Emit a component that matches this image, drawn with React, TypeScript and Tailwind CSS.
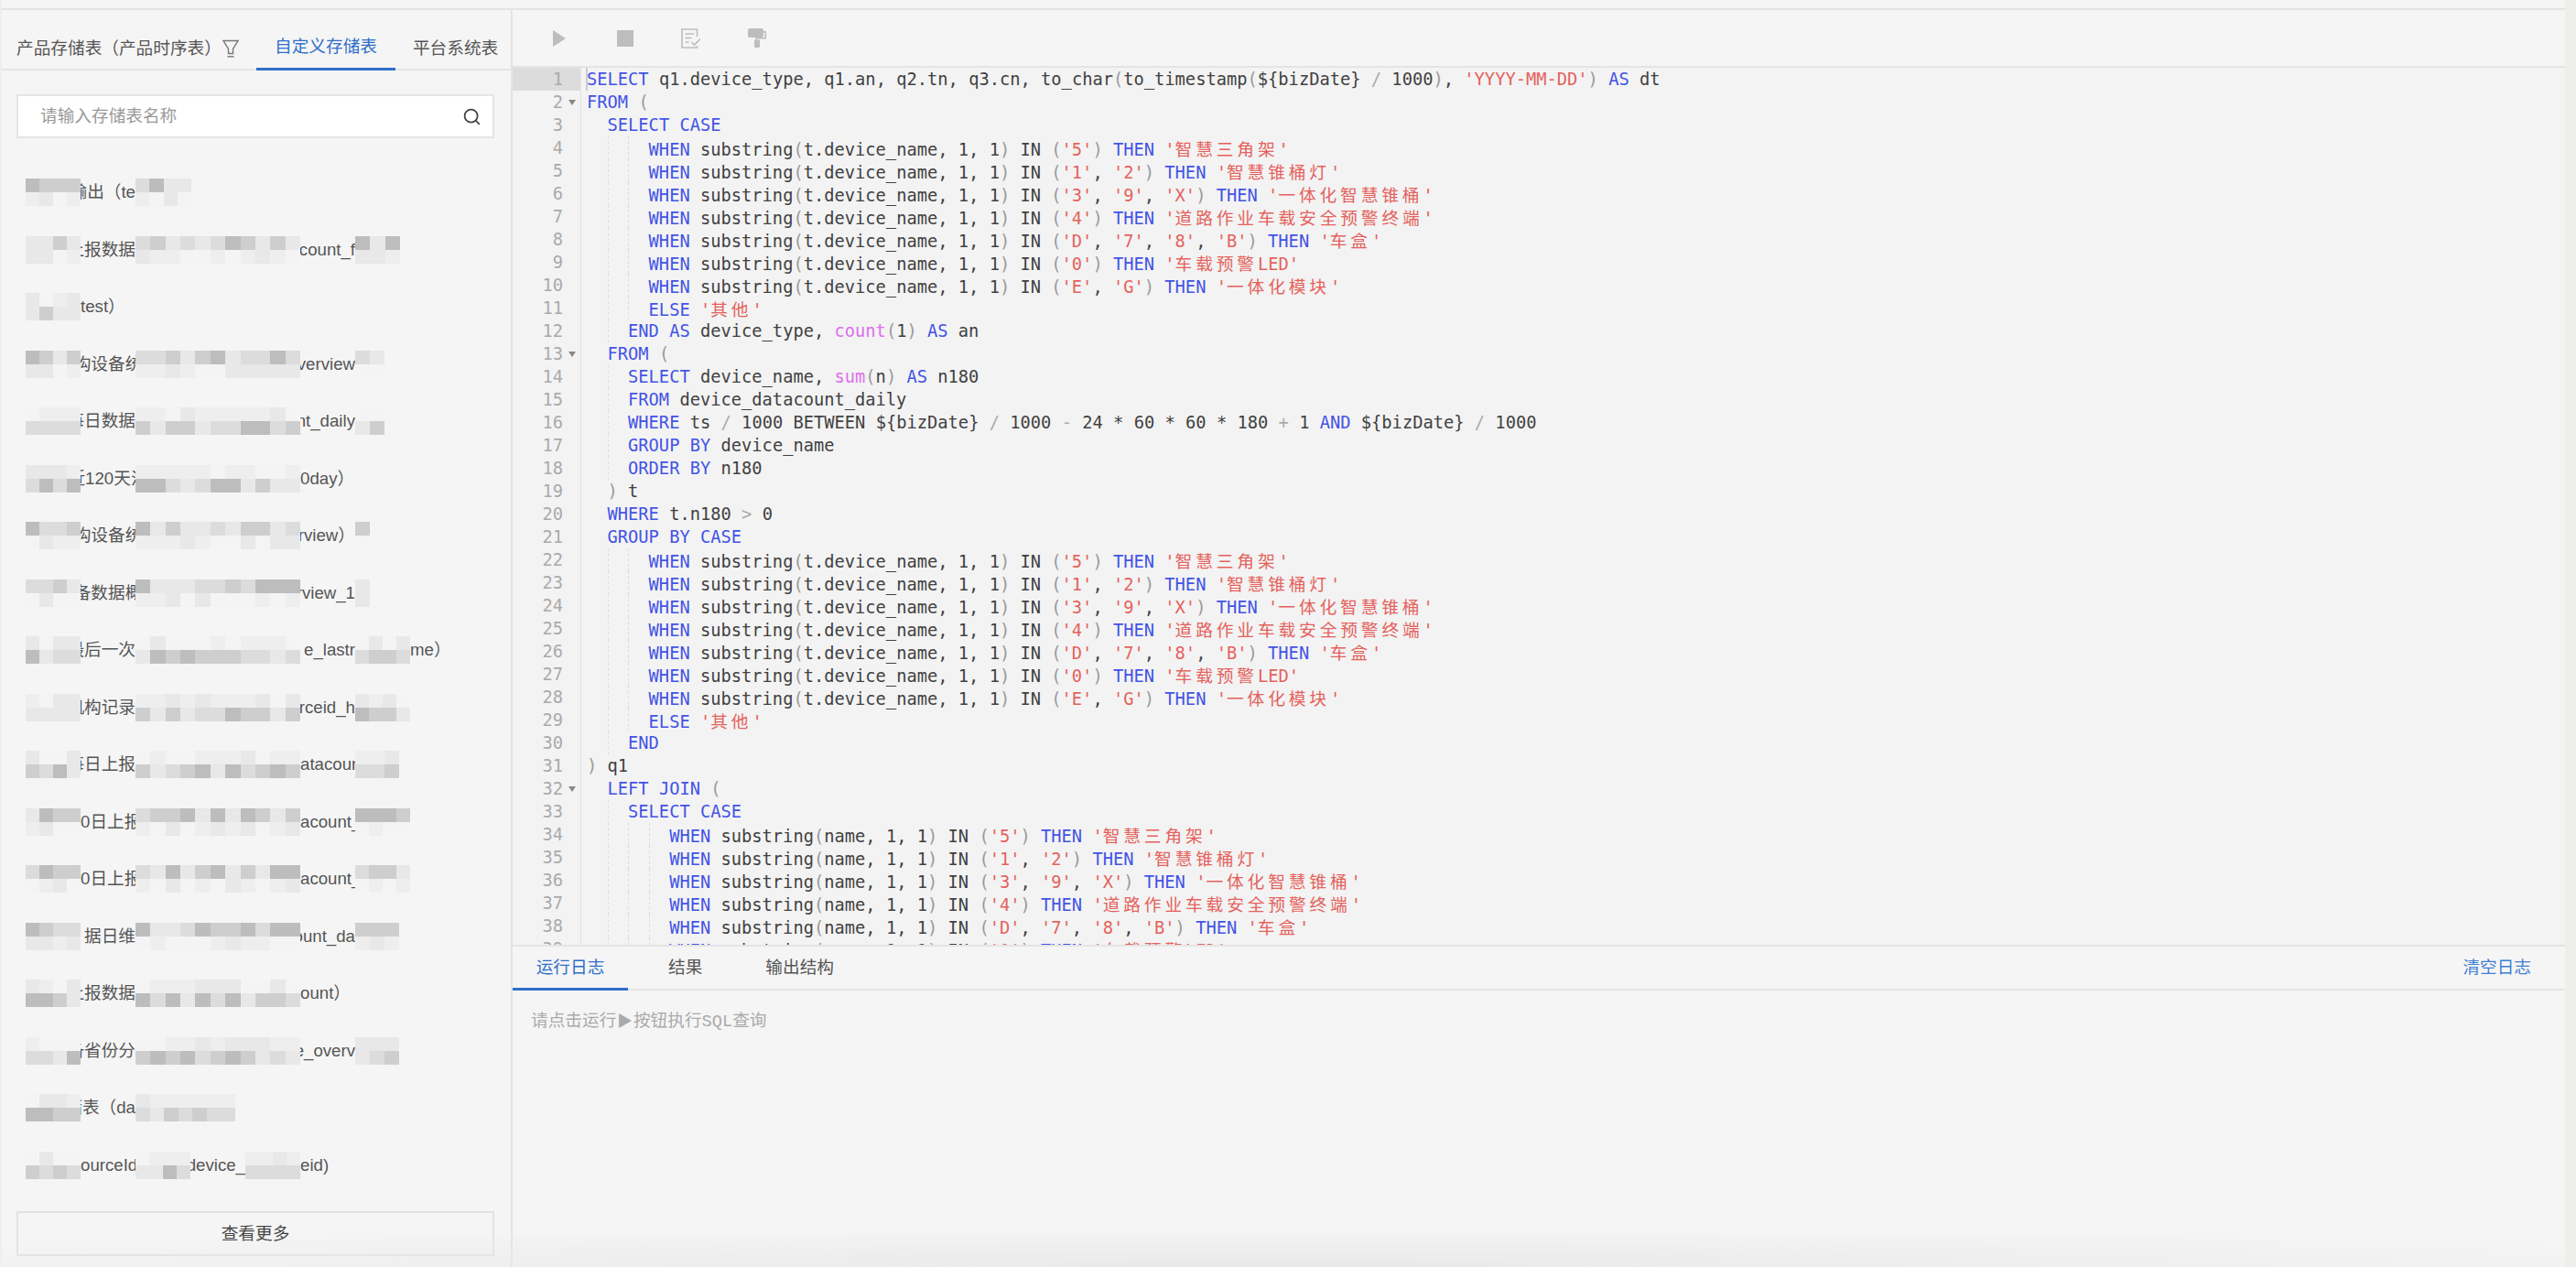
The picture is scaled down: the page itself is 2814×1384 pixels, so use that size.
import React from "react";
import { Search } from "lucide-react";

const code = `SELECT q1.device_type, q1.an, q2.tn, q3.cn, to_char(to_timestamp(\${bizDate} / 1000), 'YYYY-MM-DD') AS dt
FROM (
  SELECT CASE
      WHEN substring(t.device_name, 1, 1) IN ('5') THEN '智慧三角架'
      WHEN substring(t.device_name, 1, 1) IN ('1', '2') THEN '智慧锥桶灯'
      WHEN substring(t.device_name, 1, 1) IN ('3', '9', 'X') THEN '一体化智慧锥桶'
      WHEN substring(t.device_name, 1, 1) IN ('4') THEN '道路作业车载安全预警终端'
      WHEN substring(t.device_name, 1, 1) IN ('D', '7', '8', 'B') THEN '车盒'
      WHEN substring(t.device_name, 1, 1) IN ('0') THEN '车载预警LED'
      WHEN substring(t.device_name, 1, 1) IN ('E', 'G') THEN '一体化模块'
      ELSE '其他'
    END AS device_type, count(1) AS an
  FROM (
    SELECT device_name, sum(n) AS n180
    FROM device_datacount_daily
    WHERE ts / 1000 BETWEEN \${bizDate} / 1000 - 24 * 60 * 60 * 180 + 1 AND \${bizDate} / 1000
    GROUP BY device_name
    ORDER BY n180
  ) t
  WHERE t.n180 > 0
  GROUP BY CASE
      WHEN substring(t.device_name, 1, 1) IN ('5') THEN '智慧三角架'
      WHEN substring(t.device_name, 1, 1) IN ('1', '2') THEN '智慧锥桶灯'
      WHEN substring(t.device_name, 1, 1) IN ('3', '9', 'X') THEN '一体化智慧锥桶'
      WHEN substring(t.device_name, 1, 1) IN ('4') THEN '道路作业车载安全预警终端'
      WHEN substring(t.device_name, 1, 1) IN ('D', '7', '8', 'B') THEN '车盒'
      WHEN substring(t.device_name, 1, 1) IN ('0') THEN '车载预警LED'
      WHEN substring(t.device_name, 1, 1) IN ('E', 'G') THEN '一体化模块'
      ELSE '其他'
    END
) q1
  LEFT JOIN (
    SELECT CASE
        WHEN substring(name, 1, 1) IN ('5') THEN '智慧三角架'
        WHEN substring(name, 1, 1) IN ('1', '2') THEN '智慧锥桶灯'
        WHEN substring(name, 1, 1) IN ('3', '9', 'X') THEN '一体化智慧锥桶'
        WHEN substring(name, 1, 1) IN ('4') THEN '道路作业车载安全预警终端'
        WHEN substring(name, 1, 1) IN ('D', '7', '8', 'B') THEN '车盒'
        WHEN substring(name, 1, 1) IN ('0') THEN '车载预警LED'`.split("\n");

const keywords = ["SELECT", "CASE", "WHEN", "THEN", "ELSE", "END", "AS", "FROM", "WHERE", "GROUP", "BY", "ORDER", "LEFT", "JOIN", "AND"];
const foldLines = [2, 13, 32];

// each row: number = blurred block width, string = visible bit of text
// text prefix: ^ centre it, < left align it, default right align (runs under the block on the left)
const tables: { dark: number; parts: (number | string)[] }[] = [
  { dark: 0, parts: [60, "输出（te", 61] },
  { dark: 0, parts: [60, "上报数据", 180, "count_f", 49] },
  { dark: 1, parts: [60, "test）"] },
  { dark: 0, parts: [60, "^构设备统", 180, "verview", 32] },
  { dark: 1, parts: [60, "每日数据", 180, "nt_daily", 32] },
  { dark: 1, parts: [60, "^近120天汇", 180, "0day）"] },
  { dark: 0, parts: [60, "^构设备统", 180, "erview）", 16] },
  { dark: 0, parts: [60, "^备数据概", 180, "rview_1", 16] },
  { dark: 1, parts: [60, "最后一次", 180, "e_lastr", 60, "me）"] },
  { dark: 1, parts: [60, "机构记录", 180, "rceid_h", 60] },
  { dark: 1, parts: [60, "每日上报", 180, "<atacoun", 48] },
  { dark: 0, parts: [60, "<0日上报", 180, "<acount_", 60] },
  { dark: 0, parts: [60, "<0日上报", 180, "<acount_", 60] },
  { dark: 0, parts: [60, "据日维", 180, "ount_da", 48] },
  { dark: 1, parts: [60, "上报数据", 180, "ount）"] },
  { dark: 1, parts: [60, "备省份分", 180, "e_overv", 48] },
  { dark: 1, parts: [60, "储表（da", 109] },
  { dark: 1, parts: [60, "<ourceId", 60, "device_", 60, "eid)"] },
];

const grays = ["bg-[#f4f4f4]", "bg-[#eeeeee]", "bg-[#e8e8e8]", "bg-[#dcdcdc]", "bg-[#cecece]", "bg-[#bdbdbd]"];

function level(seed: number, row: number, col: number, dark: boolean) {
  const n = Math.sin(seed * 12.9 + col * 78.2 + row * 37.7) * 43758.5;
  const r = n - Math.floor(n);
  return dark ? 2 + Math.floor(r * 4) : Math.floor(r * 3);
}

const Mosaic = ({ width, seed, dark }: { width: number; seed: number; dark: number }) => {
  const cols = Math.max(1, Math.round(width / 16));
  return (
    <div className="relative z-10 flex shrink-0 flex-col" style={{ width }}>
      {[0, 1].map((r) => (
        <div key={r} className="flex h-[15px]">
          {Array.from({ length: cols }).map((_, c) => (
            <div key={c} className={`flex-1 ${grays[level(seed, r, c, r === dark)]}`}></div>
          ))}
        </div>
      ))}
    </div>
  );
};

const TableRow = ({ dark, parts, index }: { dark: number; parts: (number | string)[]; index: number }) => (
  <div className="flex h-[62.5px] items-center pl-[26px] text-[#555]">
    {parts.map((p, i) => {
      if (typeof p === "number") return <Mosaic key={i} width={p} seed={index * 5 + i + 1} dark={dark} />;
      if (i === parts.length - 1) return <span key={i} className="whitespace-nowrap">{p}</span>;
      const align = p[0] === "^" ? "justify-center" : p[0] === "<" ? "justify-start" : "justify-end";
      const text = p[0] === "^" || p[0] === "<" ? p.slice(1) : p;
      return (
        <div key={i} className={`flex w-[60px] shrink-0 whitespace-nowrap ${align}`}>
          <span className="shrink-0">{text}</span>
        </div>
      );
    })}
  </div>
);

const StringToken = ({ value }: { value: string }) => (
  <span className="text-[#e4625c]">
    {value.split(/([\u4e00-\u9fff]+)/).map((part, i) =>
      i % 2 === 1 ? (
        <span key={i} className="font-['Noto_Sans_CJK_SC',sans-serif] tracking-[3.86px]">{part}</span>
      ) : (
        part
      )
    )}
  </span>
);

function renderLine(line: string) {
  const indent = line.match(/^ */)![0].length;
  const guides = Math.floor(indent / 2);
  const tokens = line.slice(guides * 2).match(/'[^']*'|[A-Za-z_]\w*|\s+|./g) || [];
  return (
    <>
      {Array.from({ length: guides }).map((_, i) => (
        <span
          key={i}
          className={`inline-block w-[2ch] h-[25px] align-top box-border ${i > 0 ? "border-l border-dashed border-[#dddddd]" : ""}`}
        ></span>
      ))}
      {tokens.map((t, i) => {
        if (t[0] === "'") return <StringToken key={i} value={t} />;
        if (keywords.includes(t)) return <span key={i} className="text-[#4353e6]">{t}</span>;
        if (t === "count" || t === "sum") return <span key={i} className="text-[#dd6fec]">{t}</span>;
        if (t === "(" || t === ")") return <span key={i} className="text-[#999999]">{t}</span>;
        if ("/-+>".includes(t)) return <span key={i} className="text-[#aaaaaa]">{t}</span>;
        return <span key={i}>{t}</span>;
      })}
    </>
  );
}

const App: React.FC = () => {
  return (
    <div className="flex h-[1384px] w-full overflow-hidden bg-[#f0eeeb] pl-[2px] pr-[12px] font-['Liberation_Sans','Noto_Sans_CJK_SC',sans-serif] text-[18.67px]">
      <div className="relative flex min-w-0 flex-1 flex-col bg-[#f5f5f5]">
        <div className="h-[11px] shrink-0 border-b-2 border-[#e4e4e4]"></div>

        <div className="flex min-h-0 flex-1">
          {/* Left panel */}
          <aside className="flex w-[558px] shrink-0 flex-col border-r-2 border-[#e4e4e4]">
            <div className="flex h-[66px] shrink-0 border-b-2 border-[#e4e4e4] text-[#555]">
              <div className="flex w-[278px] items-center pl-[16px] pt-[20px]">
                <span className="w-[225px] shrink-0 whitespace-nowrap">产品存储表（产品时序表）</span>
                <svg viewBox="0 0 18 20" className="h-[20px] w-[18px] text-[#777]" fill="none" stroke="currentColor" strokeWidth="1.4">
                  <path d="M1 1.500h16l-5.500 9v5h-5v-5z" />
                  <path d="M5.500 18.800h7" />
                </svg>
              </div>
              <div className="-mb-[2px] flex items-center border-b-[3px] border-[#2f6fc9] px-[20px] pt-[17px] text-[#2f6fc9]">自定义存储表</div>
              <div className="flex items-center pl-[19px] pt-[20px]">平台系统表</div>
            </div>

            <div className="ml-[16px] mr-[18px] mt-[26px] flex h-[48px] shrink-0 items-center border-2 border-[#e4e4e4] bg-white pl-[24px] pr-[12px]">
              <input
                placeholder="请输入存储表名称"
                className="min-w-0 flex-1 bg-transparent outline-none placeholder:text-[#999999]"
              />
              <Search className="h-[21px] w-[21px] text-[#444]" strokeWidth={2} />
            </div>

            <div className="mt-[28px] flex flex-col">
              {tables.map((row, i) => (
                <TableRow key={i} index={i} dark={row.dark} parts={row.parts} />
              ))}
            </div>

            <button className="ml-[16px] mr-[18px] mt-[19px] h-[49px] shrink-0 border-2 border-[#e2e2e2] text-[#444]">查看更多</button>
          </aside>

          {/* Editor side */}
          <main className="flex min-w-0 flex-1 flex-col">
            <div className="flex h-[63px] shrink-0 items-center border-b-2 border-[#e4e4e4] pl-[15px] text-[#bdbdbd]">
              <div className="flex w-[72px] justify-center">
                <svg viewBox="0 0 14 18" className="h-[18px] w-[14px]" fill="currentColor"><path d="M0 0l14 9L0 18z" /></svg>
              </div>
              <div className="flex w-[72px] justify-center">
                <svg viewBox="0 0 18 18" className="h-[18px] w-[18px]" fill="currentColor"><path d="M0 0h18v18H0z" /></svg>
              </div>
              <div className="flex w-[72px] justify-center">
                <svg viewBox="0 0 22 22" className="h-[22px] w-[22px]" fill="none" stroke="currentColor" strokeWidth="1.6">
                  <path d="M17.500 9V1H1v20h16.500v-2" />
                  <path d="M4.500 6h9.500M4.500 10.500h7M4.500 15h4" />
                  <path d="M11.500 15l3 3 6.500-6.500" />
                </svg>
              </div>
              <div className="flex w-[72px] justify-center">
                <svg viewBox="0 0 20 21" className="h-[21px] w-[20px]" fill="currentColor">
                  <path d="M2 0h13a2 2 0 0 1 2 2v6a2 2 0 0 1-2 2H2a2 2 0 0 1-2-2V2a2 2 0 0 1 2-2z" />
                  <path d="M17 3h3v8.500H10v1.500H8.500V10H18.500V4.500H17z" />
                  <path d="M7 12.500h6v7a1.500 1.500 0 0 1-1.500 1.500h-3A1.500 1.500 0 0 1 7 19.500z" />
                </svg>
              </div>
            </div>

            <div className="relative flex h-[958px] shrink-0 overflow-hidden bg-[#f3f3f3] font-['DejaVu_Sans_Mono','Noto_Sans_CJK_SC',monospace] text-[18.73px] leading-[25px]">
              <div className="w-[75px] shrink-0 border-r border-[#e2e2e2] text-[#aaaaaa]">
                {code.map((_, i) => (
                  <div key={i} className={`flex h-[25px] justify-end ${i === 0 ? "bg-[#dcdcdc]" : ""}`}>
                    <span>{i + 1}</span>
                    <span className="flex w-[19px] items-center justify-center">
                      {foldLines.includes(i + 1) && <span className="h-0 w-0 border-x-[4px] border-t-[6px] border-x-transparent border-t-[#888888]"></span>}
                    </span>
                  </div>
                ))}
              </div>
              <div className="min-w-0 flex-1 pl-[6px] text-[#414141]">
                {code.map((line, i) => (
                  <div key={i} className="h-[25px] whitespace-pre">{renderLine(line)}</div>
                ))}
              </div>
              <div className="absolute left-[80px] top-0 h-[25px] w-[2px] bg-[#cccccc]"></div>
            </div>

            <div className="flex h-[50px] shrink-0 items-stretch justify-between border-y-2 border-[#e4e4e4] text-[#555]">
              <div className="flex">
                <div className="-mb-[2px] flex w-[126px] items-center justify-center border-b-[3px] border-[#2f6fc9] text-[#2f6fc9]">运行日志</div>
                <div className="ml-[44px] flex items-center">结果</div>
                <div className="ml-[69px] flex items-center">输出结构</div>
              </div>
              <div className="flex items-center pr-[37px] text-[#3f7fd4]">清空日志</div>
            </div>

            <div className="flex-1 pl-[20px] pt-[20px] font-['Liberation_Mono','Noto_Sans_CJK_SC',monospace] text-[#aaaaaa]">
              请点击运行<span className="inline-block w-[18.67px] text-center text-[17px]">▶</span>按钮执行SQL查询
            </div>
          </main>
        </div>

        {/* soft shadow along the bottom edge of the capture */}
        <div className="pointer-events-none absolute inset-x-0 bottom-0 z-20 h-[36px] bg-[radial-gradient(ellipse_at_bottom,#e9e9e9,transparent_90%)]"></div>
      </div>
    </div>
  );
};

export default App;
